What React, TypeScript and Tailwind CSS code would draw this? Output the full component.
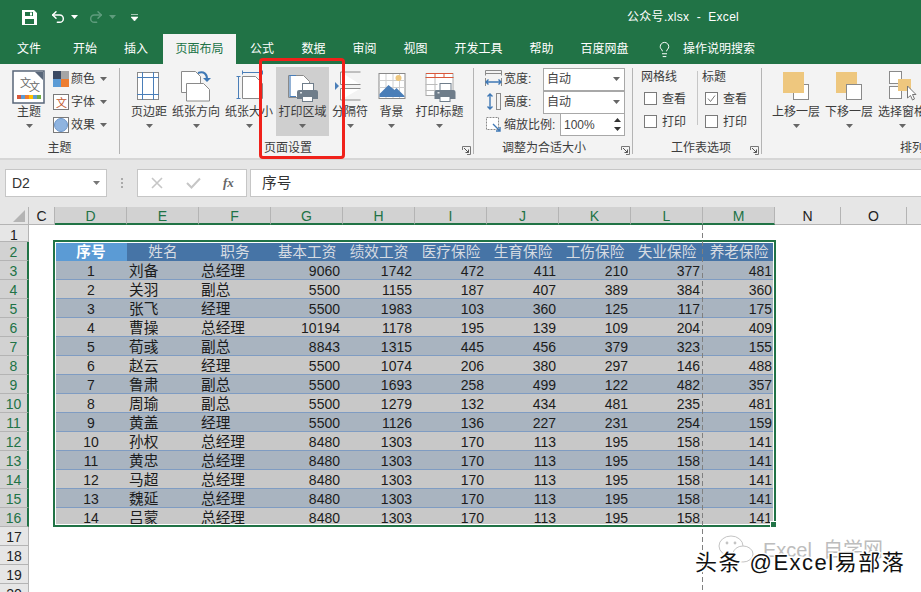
import { Lightbulb, Redo2, Undo2 } from 'lucide-react';
import type { ReactNode } from 'react';

const people = [
  ['刘备', '总经理', 9060, 1742, 472, 411, 210, 377, 481],
  ['关羽', '副总', 5500, 1155, 187, 407, 389, 384, 360],
  ['张飞', '经理', 5500, 1983, 103, 360, 125, 117, 175],
  ['曹操', '总经理', 10194, 1178, 195, 139, 109, 204, 409],
  ['荀彧', '副总', 8843, 1315, 445, 456, 379, 323, 155],
  ['赵云', '经理', 5500, 1074, 206, 380, 297, 146, 488],
  ['鲁肃', '副总', 5500, 1693, 258, 499, 122, 482, 357],
  ['周瑜', '副总', 5500, 1279, 132, 434, 481, 235, 481],
  ['黄盖', '经理', 5500, 1126, 136, 227, 231, 254, 159],
  ['孙权', '总经理', 8480, 1303, 170, 113, 195, 158, 141],
  ['黄忠', '总经理', 8480, 1303, 170, 113, 195, 158, 141],
  ['马超', '总经理', 8480, 1303, 170, 113, 195, 158, 141],
  ['魏延', '总经理', 8480, 1303, 170, 113, 195, 158, 141],
  ['吕蒙', '总经理', 8480, 1303, 170, 113, 195, 158, 141],
];
const headers = ['序号', '姓名', '职务', '基本工资', '绩效工资', '医疗保险', '生育保险', '工伤保险', '失业保险', '养老保险'];
const columns = ['D', 'E', 'F', 'G', 'H', 'I', 'J', 'K', 'L', 'M'];
const tabs = [
  { name: '文件', w: 'w-[58px]' },
  { name: '开始', w: 'w-[54px]' },
  { name: '插入', w: 'w-[48px] mr-[3px]' },
];
const tabsAfter = [
  { name: '公式', w: 'w-[52px]' },
  { name: '数据', w: 'w-[51px]' },
  { name: '审阅', w: 'w-[51px]' },
  { name: '视图', w: 'w-[51px]' },
  { name: '开发工具', w: 'w-[75px]' },
  { name: '帮助', w: 'w-[51px]' },
  { name: '百度网盘', w: 'w-[75px]' },
];

const gridCols = 'grid grid-cols-[29px_26px_repeat(10,72px)_66px_66px_14px]';

function Caret({ color = '#666' }: { color?: string }) {
  return (
    <svg width="7" height="4" viewBox="0 0 7 4" className="shrink-0">
      <path d="M0 0h7L3.5 4z" fill={color} />
    </svg>
  );
}

function Launcher() {
  return (
    <svg width="9" height="9" viewBox="0 0 9 9" className="shrink-0">
      <path d="M.5 4V.5H8.5V8.5H5" fill="none" stroke="#777" />
      <path d="M2 2l4.5 4.5M6.5 3.5v3h-3" fill="none" stroke="#555" />
    </svg>
  );
}

function Printer({ x, y }: { x: number; y: number }) {
  return (
    <g transform={`translate(${x} ${y})`}>
      <rect x="5.5" y=".5" width="11" height="8" fill="#fff" stroke="#6f7d8a" />
      <path d="M0 9a2 2 0 0 1 2-2h17a2 2 0 0 1 2 2v7H0z" fill="#6f7d8a" />
      <rect x="5.5" y="13.5" width="10" height="5" fill="#fff" stroke="#6f7d8a" />
      <rect x="3" y="9" width="2" height="1.5" fill="#dfe3e6" />
    </g>
  );
}

function LargeIcon({ id }: { id: string }) {
  const box: Record<string, string> = {
    margin: '132 68 34 36',
    orient: '179 68 34 36',
    size: '232 68 34 36',
    area: '286 68 34 36',
    breaks: '333 68 34 36',
    bg: '374.5 68 34 36',
    titles: '422.5 68 34 36',
    up: '779 68 34 36',
    down: '832 68 34 36',
    pane: '885 68 34 36',
  };
  return (
    <svg width="34" height="36" viewBox={box[id]} className="shrink-0 mt-px">
      {id === 'margin' && (
        <>
          <rect x="137.5" y="72.5" width="21" height="27" fill="#fff" stroke="#8a8a8a" />
          <path d="M142.5 72v28M153.5 72v28M137 77.5h22M137 94.5h22" stroke="#4a7eb8" fill="none" />
        </>
      )}
      {id === 'orient' && (
        <>
          <path d="M181.5 71.5h14l5 5v16h-19z" fill="#fff" stroke="#8a8a8a" />
          <path d="M186.5 83.5h17l6 6v11.5h-23z" fill="#fff" stroke="#8a8a8a" />
          <path d="M198 73c6-2 9 1 9 6" fill="none" stroke="#3f78b5" strokeWidth="2" />
          <path d="M203 78h8l-4 4z" fill="#3f78b5" />
        </>
      )}
      {id === 'size' && (
        <>
          <path d="M238.5 76v22M236.5 76.5h4M236.5 98.5h4M242.5 72.5h20M242.5 70.5v4M262.5 70.5v4" stroke="#4a7eb8" fill="none" />
          <path d="M242.5 76.5h13l7 7v15h-20z" fill="#fff" stroke="#8a8a8a" />
        </>
      )}
      {id === 'area' && (
        <>
          <path d="M288.5 75.5h15l6 6v16h-21z" fill="#fff" stroke="#8a8a8a" />
          <path d="M296 75.5h-6v21h6" fill="none" stroke="#4a7eb8" strokeWidth="1.2" />
          <Printer x={297} y={83} />
        </>
      )}
      {id === 'breaks' && (
        <>
          <path d="M335 82v8l4-4z" fill="#4a7eb8" />
          <path d="M340.5 72v12.5h20M340.5 100V88.5h20M340.5 72h20M340.5 100h20" fill="#fff" stroke="#8a8a8a" />
        </>
      )}
      {id === 'bg' && (
        <>
          <rect x="378.5" y="73.5" width="26" height="25" fill="#fff" stroke="#8a8a8a" />
          <path d="M385.5 74v24M392.5 74v24M399 74v24M379 80.5h25M379 87.5h25" stroke="#cfcfcf" fill="none" />
          <circle cx="398" cy="78" r="3" fill="#eec77e" />
          <path d="M379 94l9-9 6 5 2-2 8 8v1h-25z" fill="#4a7eb8" />
        </>
      )}
      {id === 'titles' && (
        <>
          <rect x="425.5" y="73.5" width="27" height="22" fill="#fff" stroke="#aaa" />
          <path d="M425 77.5h28M434.5 73v5M443.5 73v5" stroke="#d9583b" fill="none" />
          <path d="M425.5 73.5h27" stroke="#d9583b" />
          <path d="M425 84.5h12M425 90.5h12M434.5 78v17" stroke="#bbb" fill="none" />
          <Printer x={434} y={83} />
        </>
      )}
      {id === 'up' && (
        <>
          <rect x="793.5" y="84.5" width="15" height="15" fill="#fff" stroke="#8a8a8a" />
          <rect x="783" y="72" width="21" height="21" fill="#eec77e" />
        </>
      )}
      {id === 'down' && (
        <>
          <rect x="836" y="72" width="21" height="21" fill="#eec77e" />
          <rect x="846.5" y="84.5" width="15" height="15" fill="#fff" stroke="#8a8a8a" />
        </>
      )}
      {id === 'pane' && (
        <>
          <rect x="889.5" y="71.5" width="12" height="12" fill="#fff" stroke="#8a8a8a" />
          <rect x="889.5" y="86.5" width="12" height="12" fill="#fff" stroke="#8a8a8a" />
          <rect x="898" y="79" width="13" height="12" fill="#eec77e" />
          <path d="M907.5 86v12l3-2.5 2 4.5 2-1-2-4.5h3.5z" fill="#fff" stroke="#777" />
        </>
      )}
    </svg>
  );
}

function LargeButton({ id, label, className, active }: { id: string; label: string; className: string; active?: boolean }) {
  return (
    <div className={`flex flex-col items-center h-[69px] shrink-0 ${active ? 'bg-[#cfcfcf]' : ''} ${className}`}>
      <div className="h-[37px] flex justify-center">
        <LargeIcon id={id} />
      </div>
      <div className="h-[17px] leading-[17px] whitespace-nowrap">{label}</div>
      <div className="h-[10px] flex items-center">
        <Caret />
      </div>
    </div>
  );
}

function Group({ label, className, children, launcher, labelClass }: { label: string; className: string; children: ReactNode; launcher?: boolean; labelClass?: string }) {
  return (
    <div className={`flex flex-col h-full shrink-0 ${className}`}>
      <div className="h-[73px] flex pt-[3px]">{children}</div>
      <div className="flex-1 flex items-center relative">
        <div className={`leading-[20px] whitespace-nowrap ${labelClass ?? 'w-full text-center'}`}>{label}</div>
        {launcher && (
          <div className="absolute right-[2px] bottom-[3px]">
            <Launcher />
          </div>
        )}
      </div>
    </div>
  );
}

function Divider() {
  return <div className="w-px h-[86px] mt-[4px] bg-[#b4b4b4] shrink-0" />;
}

function SmallRow({ icon, label }: { icon: ReactNode; label: string }) {
  return (
    <div className="flex items-center h-[23px] gap-[2px]">
      <span className="w-[16px] h-[16px] shrink-0">{icon}</span>
      <span className="whitespace-nowrap">{label}</span>
      <span className="ml-[3px]"><Caret /></span>
    </div>
  );
}

function Check({ checked }: { checked?: boolean }) {
  return (
    <span className="w-[13px] h-[13px] border border-[#7a7a7a] bg-white flex items-center justify-center shrink-0">
      {checked && (
        <svg width="9" height="9" viewBox="0 0 9 9">
          <path d="M1 4.5l2.5 3L8 1.5" fill="none" stroke="#777" />
        </svg>
      )}
    </span>
  );
}

function Drop({ text }: { text: string }) {
  return (
    <div className="w-[82px] h-[23px] border border-[#a8a8a8] bg-white flex items-center justify-between pl-[3px] pr-[4px] text-[#444] -mb-px">
      <span>{text}</span>
      <Caret />
    </div>
  );
}

function Ribbon() {
  return (
    <div className="h-[94px] bg-[#f3f3f3] flex text-[12px] text-[#3c3c3c] shrink-0">
      <Group label="主题" className="w-[119px]">
        <div className="w-[58px] flex flex-col items-center">
          <svg width="34" height="34" viewBox="0 0 34 34" className="shrink-0 mt-[3px]">
            <rect x="1" y="1" width="31" height="32" fill="#fff" stroke="#59677a" strokeWidth="1.5" />
            <path d="M23 2h8v8z" fill="#59677a" />
            <text x="8" y="17" fontSize="11" fill="#666">文</text>
            <text x="17" y="21" fontSize="11" fill="#666">文</text>
            <rect x="5" y="25" width="4" height="4" fill="#d9583b" />
            <rect x="9" y="25" width="4" height="4" fill="#5b9bd5" />
            <rect x="13" y="25" width="4" height="4" fill="#ed7d31" />
            <rect x="17" y="25" width="4" height="4" fill="#ffc000" />
            <rect x="21" y="25" width="4" height="4" fill="#5b9bd5" />
            <rect x="25" y="25" width="4" height="4" fill="#70ad47" />
          </svg>
          <div className="h-[17px] leading-[17px]">主题</div>
          <div className="h-[10px] flex items-center"><Caret /></div>
        </div>
        <div className="flex flex-col -ml-[5px]">
          <SmallRow
            label="颜色"
            icon={
              <svg viewBox="0 0 16 16">
                <rect width="8" height="8" fill="#3c4a63" />
                <rect x="8" width="8" height="8" fill="#a5a5a5" />
                <rect y="8" width="8" height="8" fill="#5b9bd5" />
                <rect x="8" y="8" width="8" height="8" fill="#ed7d31" />
              </svg>
            }
          />
          <SmallRow
            label="字体"
            icon={
              <svg viewBox="0 0 16 16">
                <rect x=".5" y=".5" width="15" height="15" fill="#fff" stroke="#7a7a7a" />
                <text x="3" y="13" fontSize="11" fill="#c0562e">文</text>
              </svg>
            }
          />
          <SmallRow
            label="效果"
            icon={
              <svg viewBox="0 0 16 16">
                <rect x=".5" y=".5" width="15" height="15" fill="#fff" stroke="#7a7a7a" />
                <circle cx="8" cy="8" r="6.5" fill="#8fb4e0" stroke="#6b94c8" />
              </svg>
            }
          />
        </div>
      </Group>
      <Divider />
      <Group label="页面设置" className="w-[353px] pl-[10px]" launcher labelClass="ml-[134px]">
        <LargeButton id="margin" label="页边距" className="w-[38px]" />
        <LargeButton id="orient" label="纸张方向" className="w-[48px] ml-[4px]" />
        <LargeButton id="size" label="纸张大小" className="w-[48px] ml-[5px]" />
        <LargeButton id="area" label="打印区域" className="w-[53px] ml-[3px]" active />
        <LargeButton id="breaks" label="分隔符" className="w-[36px] ml-[3px]" />
        <LargeButton id="bg" label="背景" className="w-[27px] ml-[10px]" />
        <LargeButton id="titles" label="打印标题" className="w-[49px] ml-[10px]" />
      </Group>
      <Divider />
      <Group label="调整为合适大小" className="w-[158px] pl-[11px]" launcher labelClass="ml-[17px]">
        <div className="flex flex-col">
          <div className="flex items-center h-[23px]">
            <svg width="17" height="17" viewBox="0 0 17 17" className="shrink-0">
              <path d="M.5 5.5V.5h16v5M.5 3.5h16M.5 8v8M16.5 8v8" fill="none" stroke="#8a8a8a" />
              <path d="M1 12h15M3.5 9.5L1 12l2.5 2.5M13.5 9.5L16 12l-2.5 2.5" fill="none" stroke="#3f78b5" strokeWidth="1.4" />
            </svg>
            <span className="w-[39px] ml-[2px]">宽度:</span>
            <Drop text="自动" />
          </div>
          <div className="flex items-center h-[23px]">
            <svg width="17" height="17" viewBox="0 0 17 17" className="shrink-0">
              <rect x="11.5" y=".5" width="4" height="16" fill="none" stroke="#8a8a8a" />
              <path d="M5 1v15M2.5 3.5L5 1l2.5 2.5M2.5 13.5L5 16l2.5-2.5" fill="none" stroke="#3f78b5" strokeWidth="1.4" />
            </svg>
            <span className="w-[39px] ml-[2px]">高度:</span>
            <Drop text="自动" />
          </div>
          <div className="flex items-center h-[23px]">
            <svg width="17" height="17" viewBox="0 0 17 17" className="shrink-0">
              <rect x="1.5" y="1.5" width="12" height="12" fill="#fff" stroke="#8a8a8a" strokeDasharray="2 1" />
              <path d="M8 8l7 7M11 15h4v-4" fill="none" stroke="#3f78b5" strokeWidth="1.4" />
            </svg>
            <span className="w-[56px] ml-[2px] whitespace-nowrap">缩放比例:</span>
            <div className="w-[65px] h-[23px] border border-[#a8a8a8] bg-white flex items-center justify-between pl-[3px] pr-[3px] text-[#444]">
              <span>100%</span>
              <svg width="7" height="15" viewBox="0 0 7 15">
                <path d="M0 5l3.5-4L7 5zM0 10l3.5 4L7 10z" fill="#333" />
              </svg>
            </div>
          </div>
        </div>
      </Group>
      <Divider />
      <Group label="工作表选项" className="w-[128px] pl-[8px]" launcher>
        <div className="w-[56px] flex flex-col">
          <div className="h-[20px] leading-[20px]">网格线</div>
          <div className="h-[23px] flex items-center gap-[5px] pl-[3px]"><Check /><span>查看</span></div>
          <div className="h-[23px] flex items-center gap-[5px] pl-[3px]"><Check /><span>打印</span></div>
        </div>
        <div className="w-px h-[54px] bg-[#c6c6c6] mt-[4px] mr-[4px]" />
        <div className="flex flex-col">
          <div className="h-[20px] leading-[20px]">标题</div>
          <div className="h-[23px] flex items-center gap-[5px] pl-[3px]"><Check checked /><span>查看</span></div>
          <div className="h-[23px] flex items-center gap-[5px] pl-[3px]"><Check /><span>打印</span></div>
        </div>
      </Group>
      <Divider />
      <Group label="排列" className="w-[190px] pl-[10px]" labelClass="ml-[128px]">
        <LargeButton id="up" label="上移一层" className="w-[48px]" />
        <LargeButton id="down" label="下移一层" className="w-[48px] ml-[5px]" />
        <LargeButton id="pane" label="选择窗格" className="w-[48px] ml-[5px]" />
      </Group>
    </div>
  );
}

function TitleBar() {
  return (
    <div className="h-[34px] flex items-center text-white text-[12px] shrink-0">
      <div className="w-[627px] flex items-center pl-[22px] shrink-0">
        <svg width="15" height="15" viewBox="0 0 15 15" className="shrink-0">
          <path fillRule="evenodd" d="M0 0h12l3 3v12H0zM3 2v4h8V2zM3 9v5h9V9z" fill="#fff" />
          <rect x="8" y="2.5" width="2" height="3" fill="#fff" />
        </svg>
        <Undo2 size={16} strokeWidth={2.2} className="ml-[13px] shrink-0" />
        <span className="ml-[5px]"><Caret color="#fff" /></span>
        <Redo2 size={16} strokeWidth={2.2} className="ml-[10px] text-[#5f9c7d] shrink-0" />
        <span className="ml-[5px]"><Caret color="#5f9c7d" /></span>
        <svg width="7" height="7" viewBox="0 0 7 7" className="ml-[15px] shrink-0">
          <path d="M0 .5h7M0 3h7L3.5 7z" fill="#fff" stroke="#fff" strokeWidth=".6" />
        </svg>
      </div>
      <span className="whitespace-pre tracking-[0.3px]">公众号.xlsx  -  Excel</span>
    </div>
  );
}

function TabBar() {
  return (
    <div className="h-[30px] flex text-white text-[12px] shrink-0">
      {tabs.map((t) => (
        <div key={t.name} className={`${t.w} flex items-center justify-center`}>{t.name}</div>
      ))}
      <div className="w-[73px] bg-[#f3f3f3] text-[#217346] flex items-center justify-center">页面布局</div>
      {tabsAfter.map((t) => (
        <div key={t.name} className={`${t.w} flex items-center justify-center`}>{t.name}</div>
      ))}
      <div className="flex items-center ml-[14px]">
        <Lightbulb size={17} strokeWidth={1.4} />
        <span className="ml-[10px]">操作说明搜索</span>
      </div>
    </div>
  );
}

function FormulaBar() {
  return (
    <div className="h-[49px] bg-[#e6e6e6] border-t-2 border-[#d6d6d6] flex items-start pt-[9px] pl-[5px] shrink-0">
      <div className="w-[102px] h-[28px] bg-white border border-[#c6c6c6] flex items-center justify-between pl-[6px] pr-[6px] text-[14px] text-[#333]">
        <span>D2</span>
        <Caret color="#777" />
      </div>
      <div className="w-[30px] h-[28px] flex flex-col items-center justify-center gap-[2px]">
        <span className="w-[2px] h-[2px] bg-[#aaa]" />
        <span className="w-[2px] h-[2px] bg-[#aaa]" />
        <span className="w-[2px] h-[2px] bg-[#aaa]" />
      </div>
      <div className="w-[110px] h-[28px] bg-white border border-[#c6c6c6] flex items-center pl-[13px] shrink-0">
        <svg width="12" height="12" viewBox="0 0 12 12" className="shrink-0">
          <path d="M1 1l10 10M11 1L1 11" stroke="#c6c6c6" strokeWidth="1.6" />
        </svg>
        <svg width="15" height="12" viewBox="0 0 15 12" className="ml-[23px] shrink-0">
          <path d="M1 6l4.5 4.5L14 1.5" fill="none" stroke="#c6c6c6" strokeWidth="2" />
        </svg>
        <span className="ml-[22px] [font-family:'Liberation_Serif',serif] italic font-bold text-[13px] text-[#666]">fx</span>
      </div>
      <div className="ml-[3px] flex-1 h-[28px] bg-white border border-[#c6c6c6] border-r-0 flex items-center pl-[11px] text-[14.67px] text-[#333]">序号</div>
    </div>
  );
}

function ColHeader({ name, active }: { name: string; active?: boolean }) {
  return (
    <div className={`h-[18px] leading-[19px] text-center text-[14px] border-r border-[#b4b4b4] ${active ? 'bg-[#d2d2d2] text-[#217346] border-b-2 border-b-[#217346]' : 'bg-[#e6e6e6] text-[#222] border-b border-b-[#b4b4b4]'}`}>
      {name}
    </div>
  );
}

function RowHeader({ n, active, h = 'h-[19px]' }: { n: number; active?: boolean; h?: string }) {
  return (
    <div className={`${h} text-center text-[14px] leading-[20px] border-b border-[#b4b4b4] ${active ? 'bg-[#d2d2d2] text-[#217346] border-r-2 border-r-[#217346]' : 'bg-[#e6e6e6] text-[#222] border-r border-r-[#b4b4b4]'}`}>
      {n}
    </div>
  );
}

function Row({ n, person }: { n: number; person: (string | number)[] }) {
  const fill = n % 2 === 1 ? 'bg-[#a9b4c0]' : 'bg-[#c8c8c8]';
  const cell = `h-[19px] leading-[20px] border-b border-[#7f9cc2] text-[#1c1c1c] ${fill}`;
  return (
    <>
      <RowHeader n={n + 2} active />
      <div />
      <div className={`${cell} text-center text-[14px]`}>{n}</div>
      {person.map((v, i) =>
        i < 2 ? (
          <div key={i} className={`${cell} text-left pl-[2px] text-[14.67px] whitespace-nowrap`}>{v}</div>
        ) : (
          <div key={i} className={`${cell} text-right pr-[3px] text-[14px]`}>{v}</div>
        ),
      )}
      <div className="col-span-3" />
    </>
  );
}

function Sheet() {
  return (
    <div className="relative flex-1 overflow-hidden bg-white">
      <div className={gridCols}>
        <div className="h-[18px] bg-[#e6e6e6] border-r border-b border-[#b4b4b4] flex items-end justify-end pr-[3px] pb-[2px]">
          <svg width="12" height="12" viewBox="0 0 12 12"><path d="M12 0v12H0z" fill="#b4b4b4" /></svg>
        </div>
        <ColHeader name="C" />
        {columns.map((c) => <ColHeader key={c} name={c} active />)}
        <ColHeader name="N" />
        <ColHeader name="O" />
        <div className="h-[18px] bg-[#e6e6e6] border-b border-[#b4b4b4]" />

        <RowHeader n={1} h="h-[17px]" />
        <div className="col-span-14" />

        <RowHeader n={2} active />
        <div />
        {headers.map((h, i) => (
          <div key={h} className={`h-[19px] leading-[20px] text-center text-[14.67px] whitespace-nowrap ${i === 0 ? 'bg-[#5b9bd5] text-white font-bold' : 'bg-[#4674a6] text-[#d6dbe2]'}`}>
            {h}
          </div>
        ))}
        <div className="col-span-3" />

        {people.map((p, i) => (
          <Row key={i} n={i + 1} person={p} />
        ))}

        {[17, 18, 19, 20].map((n) => (
          <div key={n} className="contents">
            <RowHeader n={n} />
            <div className="col-span-14" />
          </div>
        ))}
      </div>

      {/* selection and print-area marks sit over the cells */}
      <div className="absolute left-[53px] top-[33px] w-[723px] h-[287px] border-2 border-[#217346] pointer-events-none">
        <div className="w-full h-full border border-white" />
        <div className="absolute -right-[3px] -bottom-[3px] w-[5px] h-[5px] bg-[#217346] border border-white box-content" />
      </div>
      <div className="absolute left-[702px] top-[18px] bottom-0 w-px bg-[repeating-linear-gradient(to_bottom,#808080_0,#808080_5px,transparent_5px,transparent_8px)]" />

      <div className="absolute left-[718px] top-[328px] flex items-center text-[#bdbdbd] text-[20px] whitespace-pre">
        <svg width="36" height="30" viewBox="0 0 36 30" className="shrink-0">
          <ellipse cx="13" cy="11" rx="12" ry="10" fill="#fff" stroke="#c4c4c4" />
          <ellipse cx="25" cy="19" rx="10" ry="8" fill="#fff" stroke="#c4c4c4" />
          <circle cx="9" cy="8" r="1.4" fill="#c4c4c4" />
          <circle cx="17" cy="8" r="1.4" fill="#c4c4c4" />
        </svg>
        <span className="ml-[9px]">Excel  自学网</span>
      </div>
      <div className="absolute left-[695px] top-[343px] text-[22px] leading-[26px] tracking-[1.5px] text-[#111] whitespace-nowrap [-webkit-text-stroke:3px_white] [paint-order:stroke_fill]">
        头条 @Excel易部落
      </div>
    </div>
  );
}

export default function App() {
  return (
    <div className="w-[921px] h-[592px] overflow-hidden relative flex flex-col bg-[#217346] [font-family:'Liberation_Sans','Noto_Sans_CJK_SC',sans-serif]">
      <TitleBar />
      <TabBar />
      <Ribbon />
      <FormulaBar />
      <Sheet />
      {/* red callout drawn over the ribbon */}
      <div className="absolute left-[259px] top-[58px] w-[86px] h-[101px] border-[3px] border-[#f0211a] rounded-[4px] pointer-events-none" />
    </div>
  );
}
